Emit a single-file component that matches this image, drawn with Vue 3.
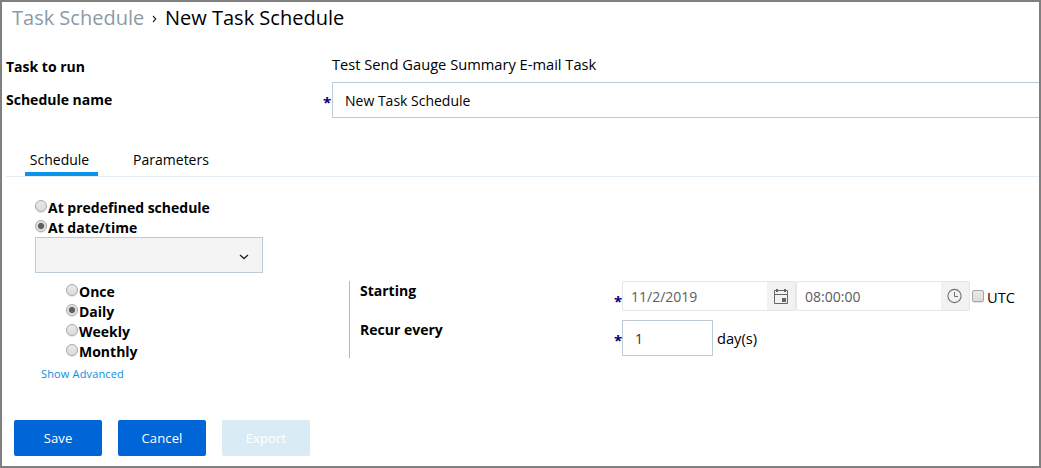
<script setup>
import { ref } from 'vue'

const modes = ['At predefined schedule', 'At date/time']
const mode = ref('At date/time')
const frequencies = ['Once', 'Daily', 'Weekly', 'Monthly']
const frequency = ref('Daily')
const tab = ref('Schedule')
</script>

<template>
  <main class="window">
    <h1 class="crumbs">
      <a class="parent">Task Schedule</a>
      <svg class="sep" width="6" height="8" viewBox="0 0 6 8"><path d="M1 1 3.8 4 1 7" /></svg>
      <span class="current">New Task Schedule</span>
    </h1>

    <div class="row task-row">
      <span class="label">Task to run</span>
      <span class="task-name">Test Send Gauge Summary E-mail Task</span>
    </div>
    <div class="row name-row">
      <span class="label">Schedule name</span>
      <span class="star">*</span>
      <div class="name-input">New Task Schedule</div>
    </div>

    <nav class="tabs">
      <button class="tab" :class="{ active: tab === 'Schedule' }" @click="tab = 'Schedule'">Schedule</button>
      <button class="tab params" :class="{ active: tab === 'Parameters' }" @click="tab = 'Parameters'">Parameters</button>
    </nav>

    <section class="modes">
      <div v-for="m in modes" :key="m" class="choice" @click="mode = m">
        <span class="radio" :class="{ on: mode === m }"></span><b>{{ m }}</b>
      </div>
      <div class="select">
        <svg width="10" height="6" viewBox="0 0 10 6"><path d="M1 1 5 4.6 9 1" /></svg>
      </div>
    </section>

    <section class="details">
      <div class="left">
        <div class="freqs">
          <div v-for="f in frequencies" :key="f" class="choice" @click="frequency = f">
            <span class="radio" :class="{ on: frequency === f }"></span><b>{{ f }}</b>
          </div>
        </div>
        <a class="advanced">Show Advanced</a>
      </div>
      <div class="right">
        <div class="field starting">
          <b class="field-label">Starting</b>
          <span class="star">*</span>
          <div class="picker date">
            <span class="value">11/2/2019</span>
            <span class="trigger">
              <svg width="16" height="17" viewBox="0 0 16 17">
                <path d="M1.5 2.5h13v13h-13zM1 6.5h14" fill="none" stroke="#656565" />
                <path d="M3 1h2v3H3zM11 1h2v3h-2zM9 10h4v4H9z" fill="#656565" />
              </svg>
            </span>
          </div>
          <div class="picker time">
            <span class="value">08:00:00</span>
            <span class="trigger">
              <svg width="16" height="16" viewBox="0 0 16 16">
                <circle cx="7.5" cy="8" r="6.6" fill="none" stroke="#707070" stroke-width="1.1" />
                <path d="M7.5 4v4.5H11" fill="none" stroke="#707070" />
              </svg>
            </span>
          </div>
          <span class="check"></span>
          <span class="utc">UTC</span>
        </div>
        <div class="field recur">
          <b class="field-label">Recur every</b>
          <span class="star">*</span>
          <div class="count">1</div>
          <span class="unit">day(s)</span>
        </div>
      </div>
    </section>

    <footer class="actions">
      <button class="btn">Save</button>
      <button class="btn">Cancel</button>
      <button class="btn off" disabled>Export</button>
    </footer>
  </main>
</template>

<style>
html, body { margin: 0; overflow: hidden; }
</style>

<style scoped>
* { box-sizing: border-box; }
.window {
  width: 1041px;
  height: 468px;
  border: 2px solid #808080;
  background: #fff;
  color: #000;
  font: 14px/20px "Open Sans", sans-serif;
  overflow: hidden;
}
button { font: inherit; border: 0; padding: 0; }
b { font-weight: 700; }
.crumbs {
  display: flex;
  margin: 0;
  padding-left: 10px;
  height: 50px;
  font-size: 20px;
  font-weight: 400;
  line-height: 32px;
  white-space: nowrap;
}
.parent { width: 133px; color: #8b9aa6; }
.sep { margin: 13px 7px 0 7px; fill: none; stroke: #222; stroke-width: 1.1; }
.row { display: flex; padding-left: 4px; }
.label { width: 317px; font-weight: 700; }
.task-row { height: 30px; padding-top: 5px; }
.task-name { margin: -3px 0 0 9px; font-size: 14.667px; }
.name-row { height: 36px; }
.name-row .label { padding-top: 8px; }
.star { width: 9px; font-weight: 700; font-size: 15px; color: #000080; }
.name-row .star { padding-top: 10px; }
.name-input {
  flex: 1;
  height: 36px;
  border: 1px solid #bccbd6;
  border-right: 0;
  padding: 8px 12px;
}
.tabs {
  display: flex;
  height: 33px;
  margin: 26px 0 0 4px;
  padding-left: 19px;
  border-bottom: 1px solid #e3edf3;
}
.tab {
  width: 73px;
  height: 32px;
  padding: 4px 4px 0 0;
  background: none;
  border-bottom: 4px solid transparent;
  color: #000;
}
.params { width: 86px; margin-left: 32px; }
.tab.active { border-bottom-color: #0a93ea; }
.modes { margin: 21px 0 0 33px; }
.choice { display: flex; height: 20px; white-space: nowrap; }
.radio {
  width: 12px;
  height: 12px;
  margin: 2px 1px 0 0;
  border: 1px solid #a9a9a9;
  border-radius: 50%;
  background: linear-gradient(#e8e8e8, #dcdcdc);
  box-shadow: 0 1px 1px #e4e4e4;
}
.radio.on { background: radial-gradient(circle, #606060 0 2.7px, #e2e2e2 3.6px); }
.select {
  display: flex;
  justify-content: flex-end;
  width: 228px;
  height: 36px;
  margin-top: -1px;
  padding: 16px 13px 0 0;
  border: 1px solid #bccbd6;
  background: #f4f4f4;
}
.select svg { fill: none; stroke: #222; stroke-width: 1.3; }
.details { display: flex; height: 147px; padding-top: 8px; }
.left { width: 347px; }
.freqs { margin: 1px 0 0 64px; }
.advanced { display: block; margin: 2px 0 0 39px; font-size: 11px; letter-spacing: 0.15px; color: #0a8de0; }
.right { height: 77px; border-left: 1px solid #b8b8b8; padding-left: 10px; }
.field { display: flex; white-space: nowrap; }
.field-label { width: 254px; }
.starting { height: 39px; }
.starting .star { width: 8px; padding-top: 10px; }
.picker {
  display: flex;
  justify-content: space-between;
  height: 30px;
  border: 1px solid #e6e6e6;
  border-radius: 2px;
  color: #5c5c5c;
  line-height: 30px;
}
.date { width: 174px; }
.time { width: 174px; }
.value { padding-left: 8px; }
.trigger { display: flex; align-items: center; justify-content: center; width: 28px; background: #f2f2f2; }
.check {
  width: 12px;
  height: 12px;
  margin: 9px 3px 0 2px;
  border: 1px solid #a6a6a6;
  border-radius: 2px;
  background: linear-gradient(#e8e8e8, #dcdcdc);
  box-shadow: 0 1px 1px #e4e4e4;
}
.utc { padding-top: 6px; font-size: 14.667px; }
.recur .star { width: 8px; padding-top: 10px; }
.count { width: 91px; height: 36px; padding: 8px 12px; border: 1px solid #bccbd6; color: #333; }
.unit { padding: 8px 0 0 4px; font-size: 14.667px; }
.actions { display: flex; gap: 16px; padding-left: 12px; }
.btn {
  width: 88px;
  height: 36px;
  border-radius: 2px;
  background: #0066d8;
  color: #fff;
  font-size: 13px;
  font-weight: 400;
  letter-spacing: 0.15px;
}
.btn.off { background: #d9ecf6; }
</style>
